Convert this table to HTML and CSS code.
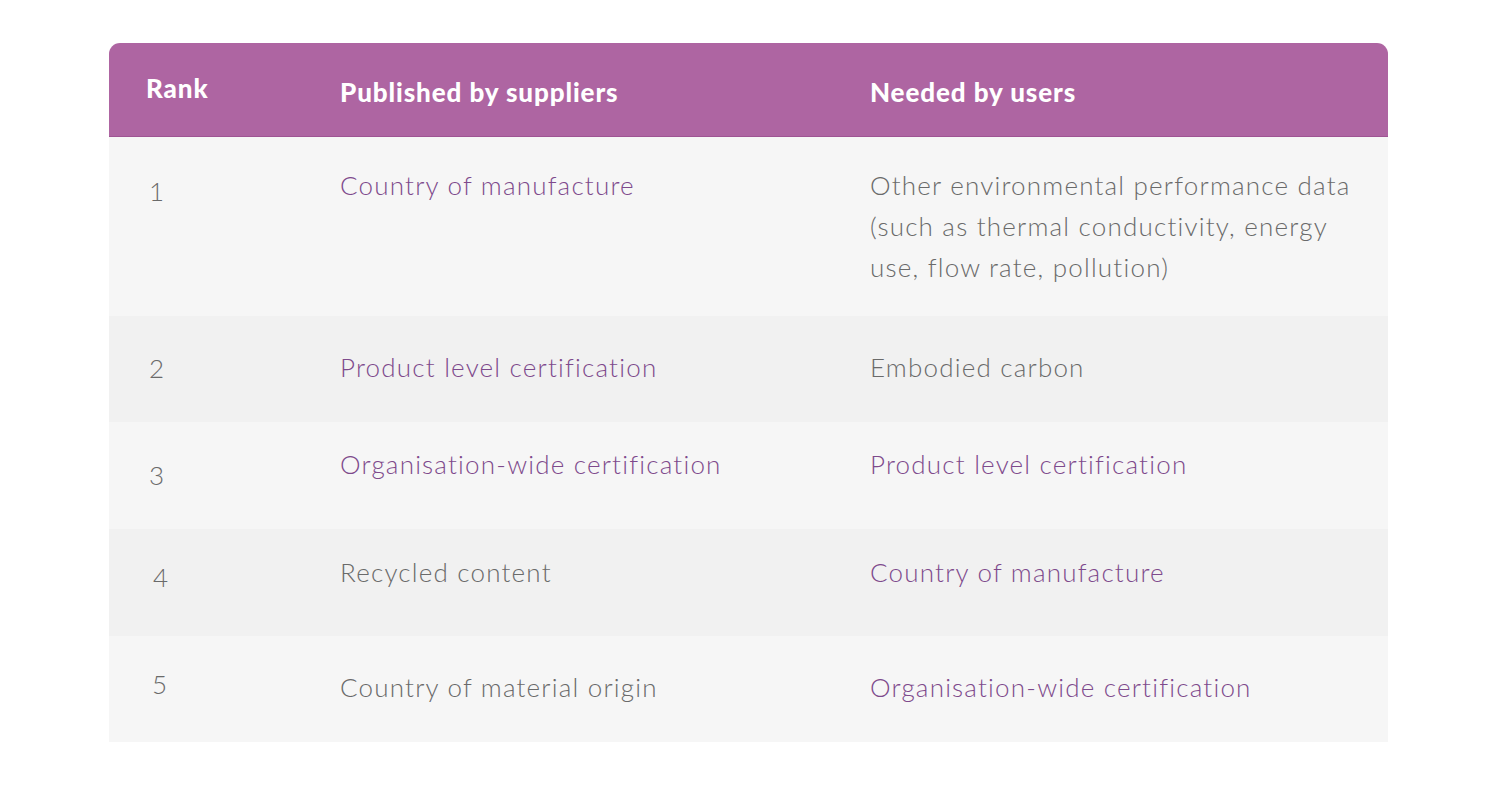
FILE: index.html
```html
<!DOCTYPE html>
<html lang="en">
<head>
<meta charset="utf-8">
<title>Ranking</title>
<link rel="stylesheet" href="styles.css">
</head>
<body>
<div class="page">
  <div class="table">
    <div class="row head">
      <div class="hcell hrank">Rank</div>
      <div class="hcell">Published by suppliers</div>
      <div class="hcell">Needed by users</div>
    </div>
    <div class="row light row1">
      <div class="cell rank">1</div>
      <div class="cell purple">Country of manufacture</div>
      <div class="cell grey">Other environmental performance data (such as thermal conductivity, energy use, flow rate, pollution)</div>
    </div>
    <div class="row dark row2">
      <div class="cell rank">2</div>
      <div class="cell purple">Product level certification</div>
      <div class="cell grey">Embodied carbon</div>
    </div>
    <div class="row light row3">
      <div class="cell rank">3</div>
      <div class="cell purple">Organisation-wide certification</div>
      <div class="cell purple">Product level certification</div>
    </div>
    <div class="row dark row4">
      <div class="cell rank">4</div>
      <div class="cell grey">Recycled content</div>
      <div class="cell purple">Country of manufacture</div>
    </div>
    <div class="row light row5">
      <div class="cell rank">5</div>
      <div class="cell grey">Country of material origin</div>
      <div class="cell purple">Organisation-wide certification</div>
    </div>
  </div>
</div>
</body>
</html>
```

FILE: styles.css
```css
html, body {
  margin: 0;
  padding: 0;
  background: #ffffff;
}
.page {
  padding: 43px 112px 40px 109px;
  font-family: Lato, "Open Sans", sans-serif;
}
.table {
  width: 1279px;
}
.row {
  display: grid;
  grid-template-columns: 231px 530px 1fr;
  min-height: 106px;
  align-items: start;
  box-sizing: border-box;
}
.head {
  background: #ae65a2;
  border-radius: 11px 11px 0 0;
  border-bottom: 1px solid #9e5493;
  min-height: 94px;
  align-items: center;
  color: #ffffff;
}
.hcell {
  font-size: 26px;
  font-weight: 900;
  letter-spacing: 0.9px;
  line-height: 30px;
  padding-top: 4px;
}
.hrank {
  padding-left: 37px;
  padding-top: 0;
  padding-bottom: 4px;
}
.light { background: #f6f6f6; }
.dark { background: #f1f1f1; }
.cell {
  padding: 28px 30px 28px 0;
  font-size: 26px;
  font-weight: 300;
  letter-spacing: 1.2px;
  line-height: 41px;
}
.rank {
  padding-left: 40px;
  color: #6a6a6a;
  letter-spacing: 0;
}
.row1 .cell { padding-top: 28px; }
.row1 .rank { padding-top: 34px; }
.row2 .cell { padding-top: 31px; }
.row2 .rank { padding-top: 32px; }
.row3 { min-height: 107px; }
.row3 .cell { padding-top: 22px; }
.row3 .rank { padding-top: 33px; }
.row4 { min-height: 107px; }
.row4 .cell { padding-top: 23px; }
.row4 .rank { padding-top: 28px; padding-left: 44px; }
.row5 .cell { padding-top: 31px; }
.row5 .rank { padding-top: 28px; padding-left: 43px; }
.purple { color: #7e4a8c; }
.grey { color: #6a6a6a; }
```
